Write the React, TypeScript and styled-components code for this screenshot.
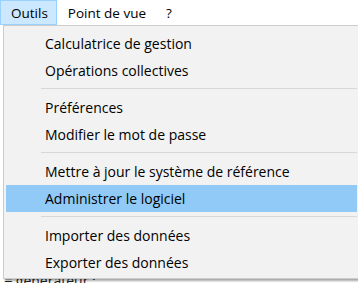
import React from 'react';
import styled, { createGlobalStyle } from 'styled-components';

const Global = createGlobalStyle`
  html, body { margin: 0; padding: 0; background: #ffffff; }
  body { font-family: "Open Sans", "Noto Sans", sans-serif; font-size: 13px; color: #000; }
`;

const Page = styled.div`
  position: relative;
  width: 358px;
  height: 283px;
  overflow: hidden;
  background: #ffffff;
`;

const MenuBar = styled.div`
  display: flex;
  height: 25px;
  align-items: stretch;
`;

const BarItem = styled.div<{ $open?: boolean }>`
  display: flex;
  align-items: center;
  padding: 0 8px 0 10px;
  border: 1px solid ${p => (p.$open ? '#99d1ff' : 'transparent')};
  background: ${p => (p.$open ? '#cce8ff' : 'transparent')};
  font-size: 13.5px;
`;

// text of the window behind the menu, mostly hidden
const Behind = styled.div`
  position: absolute;
  left: 0;
  top: 271px;
  font-size: 14px;
  padding-left: 4px;
  color: #222;
`;

const Dropdown = styled.div`
  position: absolute;
  left: 3px;
  top: 25px;
  width: 351px;
  padding: 4px 2px 2px;
  background: #f2f2f2;
  border: 1px solid #cccccc;
  box-shadow: 2px 2px 2px rgba(0, 0, 0, 0.35);
  display: flex;
  flex-direction: column;
`;

const Item = styled.div<{ $hot?: boolean }>`
  height: 27px;
  display: flex;
  align-items: center;
  padding-left: 39px;
  font-size: 14px;
  background: ${p => (p.$hot ? '#91c9f7' : 'transparent')};
`;

const Sep = styled.div`
  height: 1px;
  margin: 4px 0 5px 35px;
  background: #d7d7d7;
`;

const groups = [
  ['Calculatrice de gestion', 'Opérations collectives'],
  ['Préférences', 'Modifier le mot de passe'],
  ['Mettre à jour le système de référence', 'Administrer le logiciel'],
  ['Importer des données', 'Exporter des données'],
];

export default function App() {
  return (
    <Page>
      <Global />
      <MenuBar>
        <BarItem $open>Outils</BarItem>
        <BarItem>Point de vue</BarItem>
        <BarItem>?</BarItem>
      </MenuBar>
      <Behind>≡ générateur :</Behind>
      <Dropdown>
        {groups.map((g, i) => (
          <React.Fragment key={i}>
            {i > 0 && <Sep />}
            {g.map(label => (
              <Item key={label} $hot={label === 'Administrer le logiciel'}>{label}</Item>
            ))}
          </React.Fragment>
        ))}
      </Dropdown>
    </Page>
  );
}
